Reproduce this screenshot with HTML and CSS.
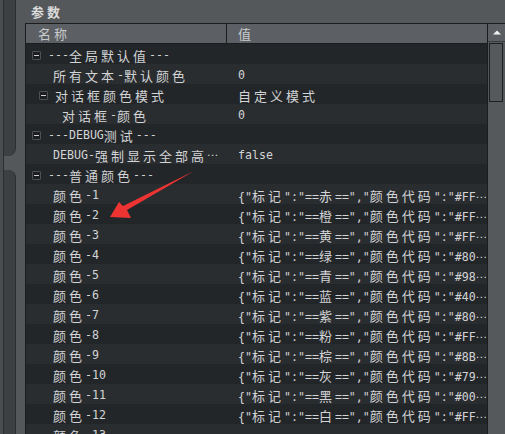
FILE: index.html
```html
<!DOCTYPE html>
<html lang="zh">

<head>
    <meta charset="UTF-8">
    <meta name="viewport" content="width=device-width, initial-scale=1.0">
    <link rel="stylesheet" href="styles.css">
    <title>参数</title>
</head>

<body>
    <div class="side">
        <div class="edge"></div>
        <div class="line"></div>
        <div class="tabs">
            <div class="tabTop"></div>
            <div class="tabBottom"></div>
        </div>
    </div>
    <div class="main">
        <div class="title"><span class="c">参数</span></div>
        <div class="table">
            <div class="grid">
                <div class="head">
                    <div class="hname"><span class="c">名称</span></div>
                    <div class="hval"><span class="c">值</span></div>
                </div>
                <div class="row">
                    <div class="name lv0"><i class="box"></i>---<span class="c">全局默认值</span>---</div>
                    <div class="val"></div>
                </div>
                <div class="row">
                    <div class="name lv1"><span class="c">所有文本</span>-<span class="c">默认颜色</span></div>
                    <div class="val">0</div>
                </div>
                <div class="row">
                    <div class="name lv1b"><i class="box"></i><span class="c">对话框颜色模式</span></div>
                    <div class="val"><span class="c">自定义模式</span></div>
                </div>
                <div class="row">
                    <div class="name lv2"><span class="c">对话框</span>-<span class="c">颜色</span></div>
                    <div class="val">0</div>
                </div>
                <div class="row">
                    <div class="name lv0"><i class="box"></i>---DEBUG<span class="c">测试</span>---</div>
                    <div class="val"></div>
                </div>
                <div class="row">
                    <div class="name lv1">DEBUG-<span class="c">强制显示全部高</span><span class="dots">⋯</span></div>
                    <div class="val">false</div>
                </div>
                <div class="row">
                    <div class="name lv0"><i class="box"></i>---<span class="c">普通颜色</span>---</div>
                    <div class="val"></div>
                </div>
                <div class="row">
                    <div class="name lv1"><span class="c">颜色</span>-1</div>
                    <div class="val">{"<span class="c">标记</span>":"==<span class="c">赤</span>==","<span class="c">颜色代码</span>":"#FF<span class="dots">⋯</span></div>
                </div>
                <div class="row">
                    <div class="name lv1"><span class="c">颜色</span>-2</div>
                    <div class="val">{"<span class="c">标记</span>":"==<span class="c">橙</span>==","<span class="c">颜色代码</span>":"#FF<span class="dots">⋯</span></div>
                </div>
                <div class="row">
                    <div class="name lv1"><span class="c">颜色</span>-3</div>
                    <div class="val">{"<span class="c">标记</span>":"==<span class="c">黄</span>==","<span class="c">颜色代码</span>":"#FF<span class="dots">⋯</span></div>
                </div>
                <div class="row">
                    <div class="name lv1"><span class="c">颜色</span>-4</div>
                    <div class="val">{"<span class="c">标记</span>":"==<span class="c">绿</span>==","<span class="c">颜色代码</span>":"#80<span class="dots">⋯</span></div>
                </div>
                <div class="row">
                    <div class="name lv1"><span class="c">颜色</span>-5</div>
                    <div class="val">{"<span class="c">标记</span>":"==<span class="c">青</span>==","<span class="c">颜色代码</span>":"#98<span class="dots">⋯</span></div>
                </div>
                <div class="row">
                    <div class="name lv1"><span class="c">颜色</span>-6</div>
                    <div class="val">{"<span class="c">标记</span>":"==<span class="c">蓝</span>==","<span class="c">颜色代码</span>":"#40<span class="dots">⋯</span></div>
                </div>
                <div class="row">
                    <div class="name lv1"><span class="c">颜色</span>-7</div>
                    <div class="val">{"<span class="c">标记</span>":"==<span class="c">紫</span>==","<span class="c">颜色代码</span>":"#80<span class="dots">⋯</span></div>
                </div>
                <div class="row">
                    <div class="name lv1"><span class="c">颜色</span>-8</div>
                    <div class="val">{"<span class="c">标记</span>":"==<span class="c">粉</span>==","<span class="c">颜色代码</span>":"#FF<span class="dots">⋯</span></div>
                </div>
                <div class="row">
                    <div class="name lv1"><span class="c">颜色</span>-9</div>
                    <div class="val">{"<span class="c">标记</span>":"==<span class="c">棕</span>==","<span class="c">颜色代码</span>":"#8B<span class="dots">⋯</span></div>
                </div>
                <div class="row">
                    <div class="name lv1"><span class="c">颜色</span>-10</div>
                    <div class="val">{"<span class="c">标记</span>":"==<span class="c">灰</span>==","<span class="c">颜色代码</span>":"#79<span class="dots">⋯</span></div>
                </div>
                <div class="row">
                    <div class="name lv1"><span class="c">颜色</span>-11</div>
                    <div class="val">{"<span class="c">标记</span>":"==<span class="c">黑</span>==","<span class="c">颜色代码</span>":"#00<span class="dots">⋯</span></div>
                </div>
                <div class="row">
                    <div class="name lv1"><span class="c">颜色</span>-12</div>
                    <div class="val">{"<span class="c">标记</span>":"==<span class="c">白</span>==","<span class="c">颜色代码</span>":"#FF<span class="dots">⋯</span></div>
                </div>
                <div class="row">
                    <div class="name lv1"><span class="c">颜色</span>-13</div>
                    <div class="val"></div>
                </div>
            </div>
            <div class="scroll">
                <div class="up"><svg width="8" height="5" viewBox="0 0 8 5"><polygon points="0,4.5 4,0.5 8,4.5" fill="#f2f2f2" /></svg></div>
                <div class="track">
                    <div class="thumb"></div>
                </div>
            </div>
        </div>
    </div>
    <!-- annotation arrow drawn over the list -->
    <svg class="arrow" width="505" height="434" viewBox="0 0 505 434">
        <polygon points="194,171 127,210 131,218 110,217 119,202 123,206" fill="#ee3333" />
    </svg>
</body>

</html>
```

FILE: styles.css
```css
body {
    margin: 0;
    height: 434px;
    overflow: hidden;
    background-color: #54585b;
    display: flex;
    font-family: "DejaVu Sans Mono", "Noto Sans CJK SC", monospace;
    font-size: 11.6px;
    color: #d2d4d6;
}

.c {
    font-family: "Noto Sans CJK SC", sans-serif;
    font-size: 13px;
    letter-spacing: 3px;
}

.dots {
    font-family: "DejaVu Sans", sans-serif;
    letter-spacing: -1px;
}

.side {
    width: 16px;
    flex: none;
    display: flex;
}

.edge {
    width: 3px;
    background-color: #4a4d50;
}

.line {
    width: 1px;
    background-color: #2c2e30;
}

.tabs {
    width: 12px;
    display: flex;
    flex-direction: column;
    gap: 14px;
}

.tabTop,
.tabBottom {
    background-color: #3d4043;
    border-right: 1px solid #2c2e30;
}

.tabTop {
    flex: 0 0 156px;
    border-bottom-right-radius: 8px;
}

.tabBottom {
    flex: 1;
    border-top-right-radius: 8px;
}

.main {
    flex: 1;
    padding-left: 9px;
    display: flex;
    flex-direction: column;
}

.title {
    height: 23px;
    line-height: 23px;
    padding-left: 6px;
    font-weight: bold;
    color: #dcdcdc;
}

.table {
    flex: 1;
    display: flex;
    border-top: 1px solid #1b1c1d;
    border-left: 1px solid #1b1c1d;
}

.grid {
    flex: 1;
    min-width: 0;
    border-right: 1px solid #1b1c1d;
    background-color: #232629;
}

.head {
    height: 19px;
    display: flex;
    background-color: #5c6064;
    border-bottom: 1px solid #1b1c1d;
    color: #c8cacc;
}

.hname {
    width: 188px;
    padding-left: 12px;
    border-right: 1px solid #1b1c1d;
    line-height: 19px;
}

.hval {
    padding-left: 11px;
    line-height: 19px;
}

.row {
    box-sizing: border-box;
    height: 20px;
    padding-top: 2px;
    display: flex;
    align-items: center;
    white-space: nowrap;
}

.row:nth-child(odd) {
    background-color: #2a2d30;
}

.name {
    width: 201px;
    flex: none;
    display: flex;
    align-items: center;
    overflow: hidden;
}

.lv0 {
    padding-left: 6px;
    width: 195px;
}

.lv1 {
    padding-left: 27px;
    width: 174px;
}

.lv1b {
    padding-left: 13px;
    width: 188px;
}

.lv2 {
    padding-left: 36px;
    width: 165px;
}

.box {
    width: 7px;
    height: 7px;
    margin-right: 7px;
    border: 1px solid #4d5054;
    border-radius: 1px;
    background-color: #1c1e20;
    display: flex;
    align-items: center;
    justify-content: center;
}

.box::after {
    content: "";
    width: 5px;
    height: 1px;
    background-color: #d0d0d0;
}

.val {
    padding-left: 11px;
    overflow: hidden;
}

.scroll {
    width: 17px;
    flex: none;
    display: flex;
    flex-direction: column;
    background-color: #55595c;
}

.up {
    height: 17px;
    display: flex;
    align-items: center;
    justify-content: center;
    background-color: #5b5f63;
    border-bottom: 1px solid #3c3f42;
}

.track {
    flex: 1;
    padding: 1px 2px 0 1px;
}

.thumb {
    height: 57px;
    border: 1px solid #1d1e1f;
    background-color: #55595c;
}

.arrow {
    position: absolute;
    left: 0;
    top: 0;
    pointer-events: none;
}
```
